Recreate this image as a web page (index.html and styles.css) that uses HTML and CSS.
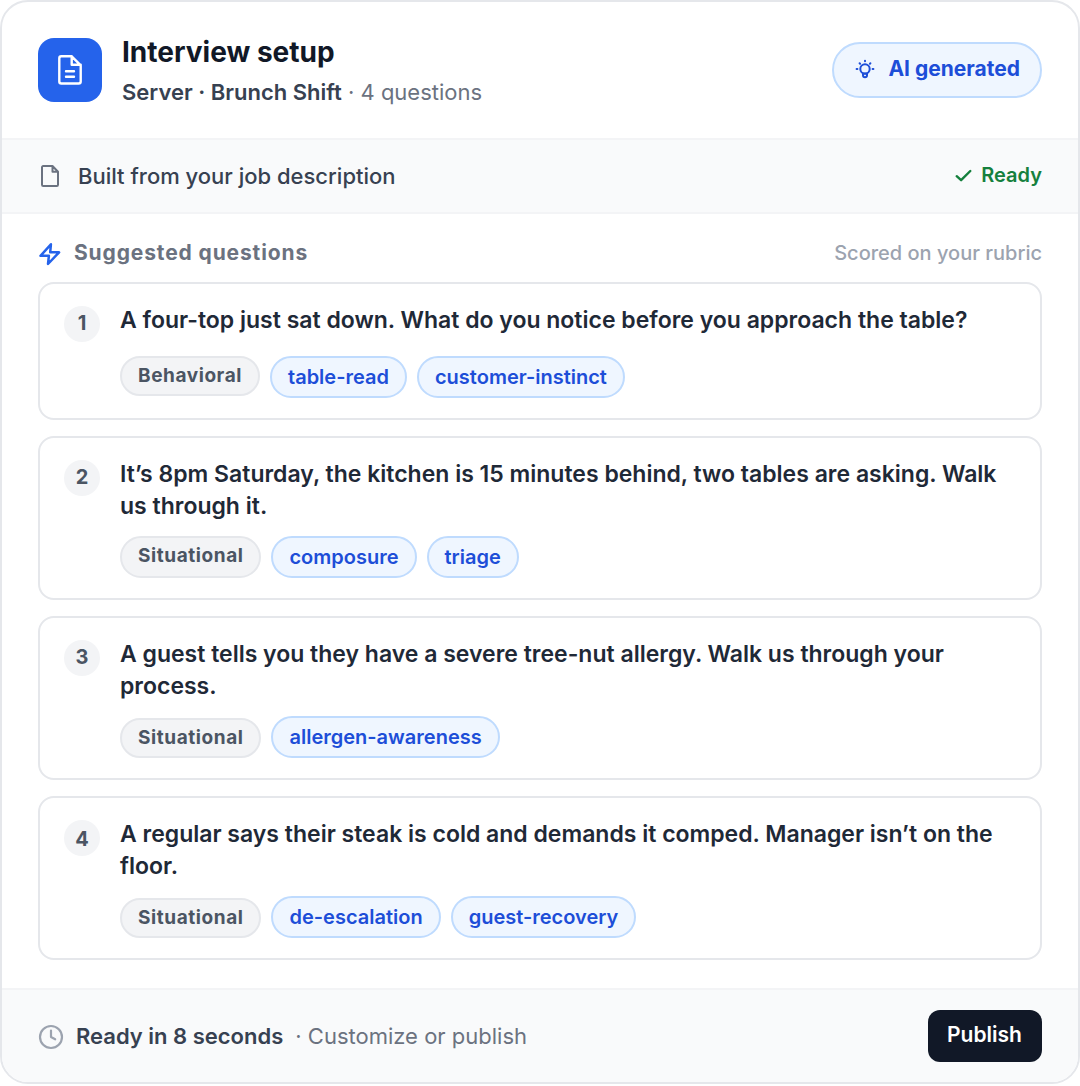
FILE: index.html
```html
<!DOCTYPE html>
<html lang="en">
<head>
<meta charset="utf-8">
<title>Interview setup</title>
<link rel="stylesheet" href="styles.css">
</head>
<body>
<main class="panel">
  <header class="header">
    <div class="logo">
      <svg width="32" height="32" viewBox="0 0 32 32" fill="none" stroke="#fff" stroke-width="2.4" stroke-linecap="round" stroke-linejoin="round"><path d="M17.700 2.300H7.300a2 2 0 0 0-2 2v23.200a2 2 0 0 0 2 2h17.400a2 2 0 0 0 2-2V11.300zM17.700 2.300v8.500h9M12 17.300h8M12 22.800h8"/></svg>
    </div>
    <div class="heading">
      <h1 class="title">Interview setup</h1>
      <p class="subtitle"><strong class="role">Server · Brunch Shift</strong> · 4 questions</p>
    </div>
    <span class="ai-badge">
      <svg width="22" height="20" viewBox="0 0 22 20" fill="none" stroke="currentColor" stroke-width="2" stroke-linecap="round" stroke-linejoin="round"><circle cx="11" cy="10" r="4.700"/><path d="M9 14.500v1.800a2 2 0 0 0 4 0v-1.800zM11 1.800v.5M2.600 10h.8M18.600 10h.8M5.600 4.300l.5.500M16.400 4.300l-.5.500"/></svg>
      AI generated
    </span>
  </header>

  <section class="source">
    <svg class="source-icon" width="24" height="24" viewBox="0 0 24 24" fill="none" stroke="#6b7280" stroke-width="2" stroke-linejoin="round"><path d="M14.500 2H5.200A1.200 1.200 0 0 0 4 3.200v17.600A1.200 1.200 0 0 0 5.200 22h13.600a1.200 1.200 0 0 0 1.200-1.200V7.700zM14.500 2v5.700H20"/></svg>
    <span class="source-text">Built from your job description</span>
    <span class="ready">
      <svg width="18" height="18" viewBox="0 0 18 18" fill="none" stroke="currentColor" stroke-width="2.400" stroke-linecap="round" stroke-linejoin="round"><path d="M1.700 10.200l4.400 4L15.300 5"/></svg>
      Ready
    </span>
  </section>

  <section class="questions">
    <div class="section-head">
      <svg width="24" height="24" viewBox="0 0 24 24" fill="none" stroke="#2563eb" stroke-width="2.500" stroke-linejoin="round"><path d="M12.900 2.300L2.500 13.800h8.400L10 22 21.100 10.300h-8.900z"/></svg>
      <h2 class="section-title">Suggested questions</h2>
      <span class="section-note">Scored on your rubric</span>
    </div>
    <ol class="list">
      <li class="card card-first">
        <span class="num">1</span>
        <div class="body">
          <p class="question">A four-top just sat down. What do you notice before you approach the table?</p>
          <div class="tags"><span class="tag kind">Behavioral</span><span class="tag skill">table-read</span><span class="tag skill">customer-instinct</span></div>
        </div>
      </li>
      <li class="card">
        <span class="num">2</span>
        <div class="body">
          <p class="question">It’s 8pm Saturday, the kitchen is 15 minutes behind, two tables are asking. Walk us through it.</p>
          <div class="tags"><span class="tag kind kind-tall">Situational</span><span class="tag skill">composure</span><span class="tag skill">triage</span></div>
        </div>
      </li>
      <li class="card">
        <span class="num">3</span>
        <div class="body">
          <p class="question">A guest tells you they have a severe tree-nut allergy. Walk us through your process.</p>
          <div class="tags"><span class="tag kind kind-low">Situational</span><span class="tag skill">allergen-awareness</span></div>
        </div>
      </li>
      <li class="card">
        <span class="num num-low">4</span>
        <div class="body">
          <p class="question">A regular says their steak is cold and demands it comped. Manager isn’t on the floor.</p>
          <div class="tags"><span class="tag kind kind-low">Situational</span><span class="tag skill">de-escalation</span><span class="tag skill">guest-recovery</span></div>
        </div>
      </li>
    </ol>
  </section>

  <footer class="footer">
    <svg width="26" height="26" viewBox="0 0 26 26" fill="none" stroke="#9ca3af" stroke-width="2.200" stroke-linecap="round" stroke-linejoin="round"><circle cx="13" cy="14" r="11"/><path d="M13 7.500V14l4.200 2.300"/></svg>
    <strong class="footer-strong">Ready in 8 seconds</strong>
    <span class="footer-text">· Customize or publish</span>
    <button class="publish" type="button">Publish</button>
  </footer>
</main>
</body>
</html>
```
FILE: styles.css
```css
* { box-sizing: border-box; }
body { margin: 0; background: #fff; font-family: Inter, "Liberation Sans", sans-serif; }
h1, h2, p, ol { margin: 0; padding: 0; }
svg { display: block; flex: none; overflow: visible; }

.panel { display: flex; flex-direction: column; width: 1080px; height: 1084px; border: 2px solid #e5e7eb; border-radius: 28px; overflow: hidden; background: #fff; }

.header { display: flex; align-items: center; height: 138px; padding: 0 36px; border-bottom: 2px solid #f3f4f6; }
.logo { display: flex; align-items: center; justify-content: center; width: 64px; height: 64px; border-radius: 16px; background: #2563eb; }
.heading { flex: 1; margin-left: 20px; padding-top: 4px; }
.title { font-size: 28px; font-weight: 700; line-height: 36px; color: #111827; }
.subtitle { margin-top: 4px; font-size: 22px; line-height: 36px; color: #6b7280; }
.role { font-weight: 600; color: #374151; }
.ai-badge { display: flex; align-items: center; gap: 12px; height: 56px; padding: 0 20px 2px; border: 2px solid #bfdbfe; border-radius: 28px; background: #eff6ff; color: #1d4ed8; font-size: 21px; font-weight: 700; line-height: 26px; }

.source { display: flex; align-items: center; height: 74px; padding: 0 36px; border-bottom: 2px solid #f3f4f6; background: #f9fafb; }
.source-text { flex: 1; margin-left: 16px; font-size: 22px; font-weight: 500; color: #374151; }
.ready { display: flex; align-items: center; gap: 8px; padding-bottom: 2px; color: #15803d; font-size: 20px; font-weight: 600; }

.questions { flex: 1; padding: 24px 36px 0; }
.section-head { display: flex; align-items: center; height: 32px; }
.section-title { flex: 1; margin-left: 12px; padding-bottom: 3px; font-size: 21px; font-weight: 700; line-height: 26px; letter-spacing: 0.87px; color: #6b7280; }
.section-note { padding-bottom: 2px; font-size: 20px; font-weight: 500; color: #9ca3af; }
.list { display: flex; flex-direction: column; gap: 16px; margin-top: 12px; list-style: none; }
.card { display: flex; gap: 20px; height: 164px; padding: 20px 24px; border: 2px solid #e5e7eb; border-radius: 16px; }
.card-first { height: 138px; }
.num { display: flex; align-items: center; justify-content: center; width: 36px; height: 36px; margin-top: 2px; padding-bottom: 2px; border-radius: 50%; background: #f3f4f6; color: #4b5563; font-size: 20px; font-weight: 700; line-height: 24px; }
.num-low { padding: 1px 0 0; }
.body { display: flex; flex: 1; flex-direction: column; justify-content: space-between; }
.question { font-size: 23px; font-weight: 600; line-height: 32px; color: #1f2937; }
.tags { display: flex; align-items: flex-start; gap: 10px; }
.tag { display: flex; align-items: center; height: 42px; padding: 0 16px; border: 2px solid; border-radius: 21px; white-space: nowrap; }
.kind { height: 40px; padding-bottom: 2px; border-color: #e5e7eb; background: #f3f4f6; color: #4b5563; font-size: 19px; font-weight: 700; letter-spacing: 0.57px; }
.kind-tall { height: 42px; padding-bottom: 4px; }
.kind-low { margin-top: 2px; }
.skill { border-color: #bfdbfe; background: #eff6ff; color: #1d4ed8; font-size: 20px; font-weight: 600; }

.footer { display: flex; align-items: center; height: 94px; padding: 0 36px; border-top: 2px solid #f3f4f6; background: #f9fafb; font-size: 22px; }
.footer-strong { margin-left: 12px; font-weight: 600; color: #374151; }
.footer-text { flex: 1; margin-left: 12px; color: #6b7280; }
.publish { width: 114px; height: 52px; padding: 0 1px 3px 0; border: 0; border-radius: 12px; background: #111827; color: #fff; font: 600 21px/25px Inter, "Liberation Sans", sans-serif; }
```
